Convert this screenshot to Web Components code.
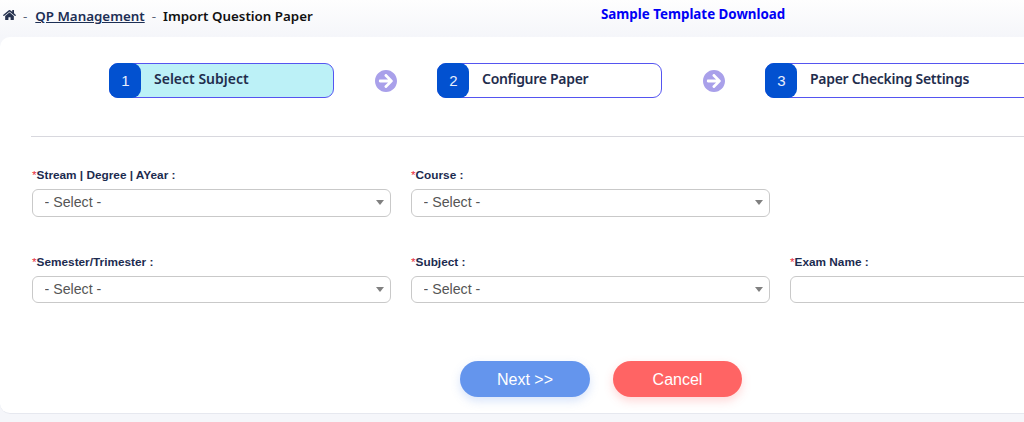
<!DOCTYPE html>
<html lang="en">
<head>
<meta charset="utf-8">
<title>Import Question Paper</title>
<style>
    html, body { margin: 0; height: 422px; overflow: hidden; background: #f5f6fa; }
    body { font-family: "Liberation Sans", Arial, sans-serif; }
</style>
</head>
<body>
<import-page></import-page>
<script>
const HEAD_FONT = '"Noto Sans", "Liberation Sans", sans-serif';

class TopBar extends HTMLElement {
    constructor() {
        super();
        this.attachShadow({ mode: 'open' });
        this.shadowRoot.innerHTML = `
            <style>
                :host {
                    display: flex;
                    height: 37px;
                    box-sizing: border-box;
                    padding: 7px 0 0 3px;
                    background: linear-gradient(#fefefe, #f5f6fa);
                    font: 600 13.35px ${HEAD_FONT};
                    color: #12233f;
                }
                .crumbs { width: 598px; display: flex; align-items: flex-start; height: 18px; line-height: 18px; white-space: nowrap; }
                svg { width: 13px; height: 12px; margin-top: 2px; fill: #26324f; }
                .sep { color: #5a6478; margin: 0 8px 0 7px; font-weight: 400; }
                .sep + .here { margin-left: -1px; }
                a.qp { color: #1d2f55; text-decoration: underline; }
                .here { color: #111; }
                a.dl { color: #0000f5; text-decoration: none; line-height: 16px; font-weight: 700; margin-top: -1px; }
            </style>
            <div class="crumbs">
                <svg viewBox="0 0 576 512"><path d="M280.37 148.26L96 300.11V464a16 16 0 0 0 16 16l112.06-.29a16 16 0 0 0 15.92-16V368a16 16 0 0 1 16-16h64a16 16 0 0 1 16 16v95.64a16 16 0 0 0 16 16.05L464 480a16 16 0 0 0 16-16V300L295.67 148.26a12.19 12.19 0 0 0-15.3 0zM571.6 251.47L488 182.56V44.05a12 12 0 0 0-12-12h-56a12 12 0 0 0-12 12v72.61L318.47 43a48 48 0 0 0-61 0L4.34 251.47a12 12 0 0 0-1.6 16.9l25.5 31A12 12 0 0 0 45.15 301l235.22-193.74a12.19 12.19 0 0 1 15.3 0L530.9 301a12 12 0 0 0 16.9-1.6l25.5-31a12 12 0 0 0-1.7-16.93z"/></svg>
                <span class="sep">-</span>
                <a class="qp">QP Management</a>
                <span class="sep">-</span>
                <span class="here">Import Question Paper</span>
            </div>
            <a class="dl">Sample Template Download</a>
        `;
    }
}
customElements.define('top-bar', TopBar);

class StepPill extends HTMLElement {
    constructor() {
        super();
        this.attachShadow({ mode: 'open' });
        this.shadowRoot.innerHTML = `
            <style>
                :host {
                    display: flex;
                    flex: none;
                    width: 225px;
                    height: 35px;
                    box-sizing: border-box;
                    border: 1px solid #5555f0;
                    border-radius: 9px;
                    background: #fff;
                    font: 600 14px ${HEAD_FONT};
                    letter-spacing: -.3px;
                    color: #1f2d4d;
                    white-space: nowrap;
                }
                :host([active]) { background: #bcf1f7; letter-spacing: 0; }
                :host([wide]) { width: 300px; }
                .num {
                    flex: none;
                    width: 32px;
                    box-sizing: border-box;
                    padding-left: 1px;
                    margin: -1px 0 -1px -1px;
                    border-radius: 9px;
                    background: #0251d0;
                    color: #e8eefc;
                    letter-spacing: 0;
                    font: 400 15px "Liberation Sans", sans-serif;
                    display: flex;
                    align-items: center;
                    justify-content: center;
                }
                .label { padding-left: 13px; line-height: 30px; }
            </style>
            <span class="num"></span>
            <span class="label"><slot></slot></span>
        `;
    }

    connectedCallback() {
        this.shadowRoot.querySelector('.num').textContent = this.getAttribute('num');
    }
}
customElements.define('step-pill', StepPill);

class StepArrow extends HTMLElement {
    constructor() {
        super();
        this.attachShadow({ mode: 'open' });
        this.shadowRoot.innerHTML = `
            <style>
                :host { display: block; flex: none; width: 22px; height: 22px; margin: 0 40px 0 41px; }
                svg { display: block; width: 22px; height: 22px; fill: #a9a0ea; }
            </style>
            <svg viewBox="8 8 496 496"><path d="M256 8c137 0 248 111 248 248S393 504 256 504 8 393 8 256 119 8 256 8zm-28.9 143.6l75.5 72.4H120c-13.3 0-24 10.7-24 24v16c0 13.3 10.7 24 24 24h182.6l-75.5 72.4c-9.7 9.3-9.9 24.8-.4 34.3l11 10.9c9.4 9.4 24.6 9.4 33.9 0L404.3 273c9.4-9.4 9.4-24.6 0-33.9L271.6 106.3c-9.4-9.4-24.6-9.4-33.9 0l-11 11c-9.4 9.6-9.2 25.1.4 34.3z"/></svg>
        `;
    }
}
customElements.define('step-arrow', StepArrow);

class FormField extends HTMLElement {
    constructor() {
        super();
        this.attachShadow({ mode: 'open' });
        this.shadowRoot.innerHTML = `
            <style>
                :host { display: block; width: 359px; }
                label {
                    display: block;
                    height: 15px;
                    padding-top: 1px;
                    margin-bottom: 6px;
                    font: 700 11.8px/15px "Liberation Sans", Arial, sans-serif;
                    color: #1c2b4f;
                    white-space: nowrap;
                }
                label i { color: #e8303a; font-style: normal; font-weight: 400; }
                .box { position: relative; height: 27.6px; }
                select, input {
                    display: block;
                    width: 100%;
                    height: 100%;
                    box-sizing: border-box;
                    border: 1px solid #c9c9c9;
                    border-radius: 6px;
                    background: #fff;
                    outline: 0;
                    appearance: none;
                    padding: 0 11px 1.5px 11.5px;
                    font: 14.2px "Liberation Sans", Arial, sans-serif;
                    color: #555;
                }
                .caret {
                    position: absolute;
                    right: 7px;
                    top: 11px;
                    border: 4px solid transparent;
                    border-top: 5px solid #808080;
                    border-bottom: 0;
                }
            </style>
            <label><i>*</i><span class="text"></span></label>
            <div class="box"></div>
        `;
    }

    connectedCallback() {
        this.shadowRoot.querySelector('.text').textContent = this.getAttribute('label');
        const box = this.shadowRoot.querySelector('.box');
        if (this.hasAttribute('text')) {
            box.innerHTML = '<input type="text">';
        } else {
            box.innerHTML = '<select><option>- Select -</option></select><span class="caret"></span>';
        }
    }
}
customElements.define('form-field', FormField);

class ActionButton extends HTMLElement {
    constructor() {
        super();
        this.attachShadow({ mode: 'open' });
        this.shadowRoot.innerHTML = `
            <style>
                :host {
                    display: flex;
                    align-items: center;
                    justify-content: center;
                    flex: none;
                    width: 130px;
                    height: 36px;
                    box-sizing: border-box;
                    padding-top: 2px;
                    border-radius: 18px;
                    background: #6495ed;
                    box-shadow: 0 4px 10px rgba(100, 149, 237, .25);
                    color: #fff;
                    font: 16px "Liberation Sans", Arial, sans-serif;
                    cursor: pointer;
                }
                :host([danger]) {
                    width: 129px;
                    background: #ff6464;
                    box-shadow: 0 4px 10px rgba(255, 100, 100, .25);
                }
            </style>
            <slot></slot>
        `;
    }
}
customElements.define('action-button', ActionButton);

class ImportPage extends HTMLElement {
    constructor() {
        super();
        this.attachShadow({ mode: 'open' });
        this.shadowRoot.innerHTML = `
            <style>
                :host { display: block; height: 422px; overflow: hidden; }
                .card {
                    height: 377px;
                    box-sizing: border-box;
                    margin-right: -20px;
                    padding: 26px 0 0 32px;
                    background: #fff;
                    border-radius: 10px;
                    border-bottom: 1px solid #e6e8ef;
                    overflow: hidden;
                }
                .steps { display: flex; align-items: center; padding-left: 77px; }
                hr { height: 1px; border: 0; margin: 38px 0 30px -1px; background: #d8d8de; }
                .fields { display: grid; grid-template-columns: repeat(3, 359px); column-gap: 20px; row-gap: 37px; }
                .blank { width: 359px; }
                .actions { display: flex; gap: 23px; padding: 57.8px 0 0 428px; }
            </style>
            <top-bar></top-bar>
            <div class="card">
                <div class="steps">
                    <step-pill num="1" active>Select Subject</step-pill>
                    <step-arrow></step-arrow>
                    <step-pill num="2">Configure Paper</step-pill>
                    <step-arrow></step-arrow>
                    <step-pill num="3" wide>Paper Checking Settings</step-pill>
                </div>
                <hr>
                <div class="fields">
                    <form-field label="Stream | Degree | AYear :"></form-field>
                    <form-field label="Course :"></form-field>
                    <div class="blank"></div>
                    <form-field label="Semester/Trimester :"></form-field>
                    <form-field label="Subject :"></form-field>
                    <form-field label="Exam Name :" text></form-field>
                </div>
                <div class="actions">
                    <action-button>Next &gt;&gt;</action-button>
                    <action-button danger>Cancel</action-button>
                </div>
            </div>
        `;
    }
}
customElements.define('import-page', ImportPage);
</script>
</body>
</html>
